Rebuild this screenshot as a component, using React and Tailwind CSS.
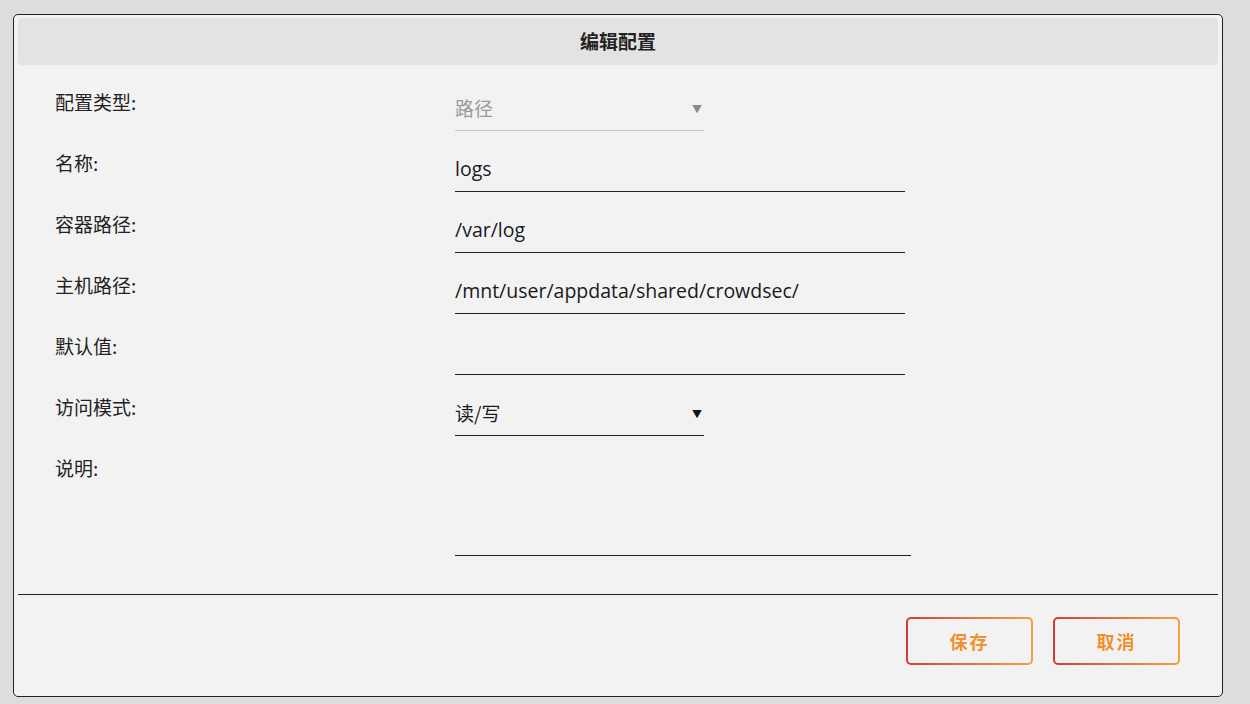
import React from "react";

const labelFont = { fontFamily: '"Noto Sans CJK SC", "Noto Sans", sans-serif' };

function Row({ label, children }) {
  return (
    <div className="flex h-[61px]">
      <div className="w-[400px] pt-[8px] text-[19px] text-[#222]">{label}:</div>
      <div>{children}</div>
    </div>
  );
}

function TextInput({ value, width = "w-[450px]" }) {
  return (
    <div
      className={`${width} h-[51px] border-b border-[#222] pt-[15px] text-[19.5px] leading-[26px] text-[#1a1a1a]`}
      style={{ fontFamily: '"Open Sans", "Noto Sans CJK SC", sans-serif' }}
    >
      {value}
    </div>
  );
}

function Select({ value, disabled }) {
  return (
    <div
      className={`flex w-[249px] h-[51px] items-center justify-between border-b pt-[7px] pr-[2px] text-[19px] ${
        disabled ? "border-[#c8c8c8] text-[#9a9a9a]" : "border-[#222] text-[#1a1a1a]"
      }`}
    >
      <span>{value}</span>
      <span className={`text-[10px] ${disabled ? "text-[#8a8a8a]" : "text-[#111]"}`}>▼</span>
    </div>
  );
}

function GradButton({ children }) {
  return (
    <div className="rounded-[5px] bg-gradient-to-r from-[#d33a3a] to-[#f2a140] p-[2px]">
      <button className="flex h-[44px] w-[123px] items-center justify-center rounded-[3px] bg-[#f2f2f2] text-[18px] font-bold tracking-[2px] text-[#f0902f]">
        {children}
      </button>
    </div>
  );
}

export default function App() {
  return (
    <div className="h-[704px] w-[1250px] bg-[#dddddd] pt-[14px] pl-[13px]" style={labelFont}>
      <div className="flex h-[683px] w-[1210px] flex-col rounded-[5px] border border-[#222] bg-[#f2f2f2] px-[4px] pt-[3px]">
        <div className="flex h-[47px] items-center justify-center rounded-[4px] bg-[#e3e3e3] text-[19px] font-bold text-[#222]">
          编辑配置
        </div>
        <div className="pl-[37px] pt-[15px]">
          <Row label="配置类型">
            <Select value="路径" disabled />
          </Row>
          <Row label="名称">
            <TextInput value="logs" />
          </Row>
          <Row label="容器路径">
            <TextInput value="/var/log" />
          </Row>
          <Row label="主机路径">
            <TextInput value="/mnt/user/appdata/shared/crowdsec/" />
          </Row>
          <Row label="默认值">
            <TextInput value="" />
          </Row>
          <Row label="访问模式">
            <Select value="读/写" />
          </Row>
          <div className="flex">
            <div className="w-[400px] pt-[8px] text-[19px] text-[#222]">说明:</div>
            <div className="h-[110px] w-[456px] border-b border-[#222]" />
          </div>
        </div>
        <div className="mt-[38px] border-t border-[#222]" />
        <div className="flex justify-end gap-[20px] pt-[22px] pr-[38px]">
          <GradButton>保存</GradButton>
          <GradButton>取消</GradButton>
        </div>
      </div>
    </div>
  );
}
